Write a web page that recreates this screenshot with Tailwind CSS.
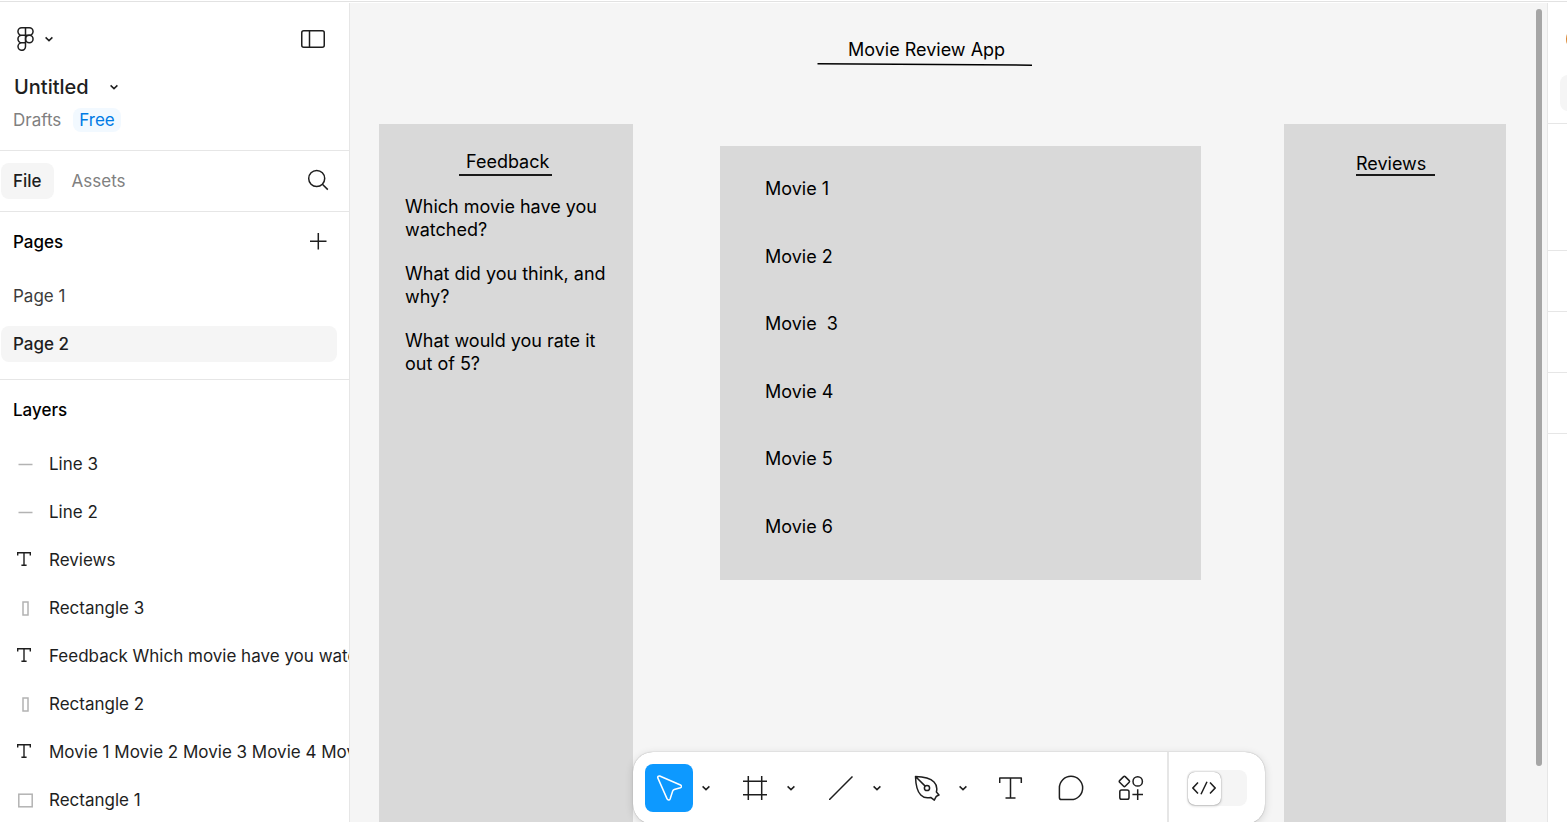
<!DOCTYPE html>
<html lang="en">
<head>
<meta charset="utf-8">
<meta name="viewport" content="width=device-width, initial-scale=1">
<title>Untitled</title>
<script src="https://cdn.jsdelivr.net/npm/@tailwindcss/browser@4"></script>
</head>
<body class="flex h-screen flex-col overflow-hidden bg-white font-[Inter,sans-serif] text-[17px] leading-6 text-[#1e1e1e]">
<svg class="hidden" aria-hidden="true">
  <symbol id="chevron" viewBox="0 0 10 6"><path d="M1.600 1.400 5 4.600 8.400 1.400" fill="none" stroke="currentColor" stroke-width="1.500"/></symbol>
  <symbol id="text" viewBox="0 0 14 16"><path d="M.7 3.600V.7h12.600v2.900M7 .7v12.600M4.400 13.300h5.200" fill="none" stroke="currentColor" stroke-width="1.400"/></symbol>
</svg>
<div class="mt-px h-0.5 shrink-0 border-t border-[#e2e2e2]"></div>
<div class="flex min-h-0 flex-1">

  <aside class="flex w-[350px] shrink-0 flex-col overflow-hidden border-r border-[#e6e6e6]">
    <header class="h-[148px] shrink-0 border-b border-[#e6e6e6] pl-[13px] pr-6 pt-6">
      <div class="flex h-6 items-center justify-between">
        <button class="flex items-center gap-2.5 pl-1" aria-label="Main menu">
          <svg class="h-6 w-[17px]" viewBox="0 0 17 24" fill="none" stroke="currentColor" stroke-width="1.5"><path d="M8.5.8H4.7a3.75 3.75 0 0 0 0 7.5h3.8zM8.5.8h3.8a3.75 3.75 0 0 1 0 7.5H8.5zM8.5 8.3H4.7a3.75 3.75 0 0 0 0 7.5h3.8zM4.7 15.8a3.75 3.75 0 1 0 3.8 3.7v-3.7z"/><circle cx="12.3" cy="12" r="3.75"/></svg>
          <svg class="h-1.5 w-2.5"><use href="#chevron"/></svg>
        </button>
        <button aria-label="Minimize UI"><svg class="h-[18px] w-6" viewBox="0 0 24 18" fill="none" stroke="currentColor" stroke-width="1.5"><rect x=".75" y=".75" width="22.500" height="16.500" rx="2"/><path d="M8.500.7v16.600"/></svg></button>
      </div>
      <button class="mt-6 flex h-6 items-center gap-5 pl-px text-[20px] font-medium">Untitled<svg class="h-1.5 w-2.5"><use href="#chevron"/></svg></button>
      <div class="mt-[9px] flex items-center gap-3 text-[#808080]">
        <a href="#">Drafts</a>
        <a href="#" class="rounded-lg bg-[#f2f9ff] px-1.5 text-[#007be5]">Free</a>
      </div>
    </header>

    <div class="flex h-[61px] shrink-0 items-center border-b border-[#e6e6e6] pl-px pr-5">
      <button class="h-9 rounded-lg bg-[#f5f5f5] px-3 font-medium">File</button>
      <button class="ml-1.5 h-9 px-3 text-[#808080]">Assets</button>
      <button class="ml-auto" aria-label="Find"><svg class="h-6 w-[22px]" viewBox="0 0 22 24" fill="none" stroke="currentColor" stroke-width="1.5"><circle cx="9.700" cy="9.500" r="8"/><path d="m15.400 15.200 5.400 5.400"/></svg></button>
    </div>

    <section class="h-[168px] shrink-0 border-b border-[#e6e6e6] pl-px pr-3 pt-3">
      <div class="flex h-9 items-center justify-between pl-3 pr-2.5">
        <h2 class="font-medium text-black">Pages</h2>
        <button aria-label="Add page"><svg class="h-5 w-[18px]" viewBox="0 0 18 20" fill="none" stroke="currentColor" stroke-width="1.5"><path d="M9.300 1v16.500M1 9.300h16.500"/></svg></button>
      </div>
      <button class="mt-[18px] block h-9 w-full rounded-lg px-3 text-left text-[#3c3c3c]">Page 1</button>
      <button class="mt-3 block h-9 w-full rounded-lg bg-[#f5f5f5] px-3 text-left font-medium">Page 2</button>
    </section>

    <section class="min-h-0 flex-1 overflow-hidden">
      <h2 class="mt-[18px] pl-[13px] font-medium text-black">Layers</h2>
      <ul class="mt-[18px] whitespace-nowrap">
        <li><button class="flex h-12 items-center gap-4 pl-[18px]"><svg class="h-4 w-[15px] shrink-0" viewBox="0 0 15 16"><path d="M.5 8.500h14" stroke="#b3b3b3" stroke-width="1.500"/></svg>Line 3</button></li>
        <li><button class="flex h-12 items-center gap-4 pl-[18px]"><svg class="h-4 w-[15px] shrink-0" viewBox="0 0 15 16"><path d="M.5 8.500h14" stroke="#b3b3b3" stroke-width="1.500"/></svg>Line 2</button></li>
        <li><button class="flex h-12 items-center gap-[18px] pl-[17px]"><svg class="h-4 w-3.5 shrink-0"><use href="#text"/></svg>Reviews</button></li>
        <li><button class="flex h-12 items-center gap-4 pl-[18px]"><svg class="h-4 w-[15px] shrink-0" viewBox="0 0 15 16"><rect x="5" y="2" width="5" height="13" fill="none" stroke="#b3b3b3" stroke-width="1.500"/></svg>Rectangle 3</button></li>
        <li><button class="flex h-12 items-center gap-[18px] pl-[17px]"><svg class="h-4 w-3.5 shrink-0"><use href="#text"/></svg>Feedback Which movie have you watched?</button></li>
        <li><button class="flex h-12 items-center gap-4 pl-[18px]"><svg class="h-4 w-[15px] shrink-0" viewBox="0 0 15 16"><rect x="5" y="2" width="5" height="13" fill="none" stroke="#b3b3b3" stroke-width="1.500"/></svg>Rectangle 2</button></li>
        <li><button class="flex h-12 items-center gap-[18px] pl-[17px]"><svg class="h-4 w-3.5 shrink-0"><use href="#text"/></svg>Movie 1 Movie 2 Movie 3 Movie 4 Movie 5 Movie 6</button></li>
        <li><button class="flex h-12 items-center gap-4 pl-[18px]"><svg class="h-4 w-[15px] shrink-0" viewBox="0 0 15 16"><rect x=".8" y="2.200" width="13.400" height="12.600" fill="none" stroke="#b3b3b3" stroke-width="1.500"/></svg>Rectangle 1</button></li>
      </ul>
    </section>
  </aside>

  <main class="relative min-w-0 flex-1 overflow-hidden bg-[#f5f5f5] text-[18px] leading-[23px] text-black">
    <!-- Free canvas objects -->
    <h1 class="absolute left-[498px] top-[35px] whitespace-nowrap">Movie Review App</h1>
    <svg class="absolute left-[467px] top-[59px] h-1 w-[215px]" viewBox="0 0 215 4"><path d="M.5 1.700 215 3.200" stroke="#000" stroke-width="1.500"/></svg>

    <div class="absolute bottom-0 left-[29px] top-[121px] w-[254px] bg-[#d9d9d9]"></div>
    <h2 class="absolute left-[116px] top-[147px]">Feedback</h2>
    <div class="absolute left-[109px] top-[171px] h-0.5 w-[93px] bg-[#1a1a1a]"></div>
    <div class="absolute left-[55px] top-[192px] whitespace-nowrap">
      <p>Which movie have you<br>watched?</p>
      <p class="mt-[21px]">What did you think, and<br>why?</p>
      <p class="mt-[21px]">What would you rate it<br>out of 5?</p>
    </div>

    <div class="absolute left-[370px] top-[143px] h-[434px] w-[481px] bg-[#d9d9d9]"></div>
    <ul class="absolute left-[415px] top-[174px] flex h-[361px] flex-col justify-between whitespace-pre">
      <li>Movie 1</li><li>Movie 2</li><li>Movie  3</li><li>Movie 4</li><li>Movie 5</li><li>Movie 6</li>
    </ul>

    <div class="absolute bottom-0 left-[934px] top-[121px] w-[222px] bg-[#d9d9d9]"></div>
    <h2 class="absolute left-[1006px] top-[149px]">Reviews</h2>
    <div class="absolute left-[1006px] top-[171px] h-0.5 w-[79px] bg-[#1a1a1a]"></div>

    <div class="absolute bottom-14 right-[5px] top-1.5 w-1.5 rounded-full bg-[#a6a6a6]"></div>

    <!-- Floating toolbar, running slightly past the lower edge -->
    <div class="absolute inset-x-0 -bottom-0.5 flex justify-center">
      <div role="toolbar" aria-label="Tools" class="flex h-[72px] items-center rounded-[20px] bg-white pl-3 text-[#1e1e1e] shadow-[0_0_1px_rgba(0,0,0,0.4),0_2px_8px_rgba(0,0,0,0.14)]">
        <div class="flex gap-3.5">
          <div class="flex">
            <button aria-label="Move" class="grid size-12 place-items-center rounded-lg bg-[#0d99ff] text-white"><svg class="size-[26px]" viewBox="-1 0 26 26" fill="none" stroke="currentColor" stroke-width="1.5" stroke-linejoin="round"><path d="M.8 2.900C.4 1.700 1.500.6 2.700 1L23.500 10c1.300.6 1.200 2.400-.1 2.800l-6.100 1.700a2.500 2.500 0 0 0-1.600 1.500l-2.600 8c-.5 1.400-2.400 1.400-2.900.1z"/></svg></button>
            <button aria-label="Move tools" class="grid w-6 place-items-center pl-0.5"><svg class="h-1.5 w-2.5"><use href="#chevron"/></svg></button>
          </div>
          <div class="flex">
            <button aria-label="Frame" class="grid size-12 place-items-center"><svg class="size-6" viewBox="0 0 24 24" fill="none" stroke="currentColor" stroke-width="1.5"><path d="M5.300 0v24M18.700 0v24M0 5.300h24M0 18.700h24"/></svg></button>
            <button aria-label="Region tools" class="grid w-6 place-items-center"><svg class="h-1.5 w-2.5"><use href="#chevron"/></svg></button>
          </div>
          <div class="flex">
            <button aria-label="Line" class="grid size-12 place-items-center"><svg class="size-6" viewBox="0 0 24 24" fill="none" stroke="currentColor" stroke-width="1.5"><path d="M0 24 23.500.5"/></svg></button>
            <button aria-label="Shape tools" class="grid w-6 place-items-center"><svg class="h-1.5 w-2.5"><use href="#chevron"/></svg></button>
          </div>
          <div class="flex">
            <button aria-label="Pen" class="grid size-12 place-items-center"><svg class="size-[26px]" viewBox="0 0 26 26" fill="none" stroke="currentColor" stroke-width="1.5" stroke-linejoin="round"><path d="M1.500 1.500c7.500.2 15 2 18.500 5.500 2.800 2.800 3.300 6.300 2.400 10l2.600 3-1.600.7c-.9.400-1.300.8-1.700 1.700l-1.400 2.700-3.600-2.700c-4 1-7.500.1-9.900-2.400C3.400 16.700 1.700 9 1.500 1.500zM1.500 1.500l9.700 9.600"/><circle cx="13" cy="13" r="2.600"/></svg></button>
            <button aria-label="Drawing tools" class="grid w-6 place-items-center"><svg class="h-1.5 w-2.5"><use href="#chevron"/></svg></button>
          </div>
        </div>
        <div class="ml-3 flex gap-3">
          <button aria-label="Text" class="grid size-12 place-items-center"><svg class="h-[22px] w-6" viewBox="0 0 24 22" fill="none" stroke="currentColor" stroke-width="1.5" stroke-linejoin="round"><path d="M.7 6V1h21.600v5M11.500 1v20M6.500 21h10"/></svg></button>
          <button aria-label="Comment" class="grid size-12 place-items-center"><svg class="size-[26px]" viewBox="0 0 26 26" fill="none" stroke="currentColor" stroke-width="1.500"><path d="M13 1.300a11.600 11.600 0 1 1 0 23.300H3.500a2.100 2.100 0 0 1-2.100-2.100V13A11.600 11.600 0 0 1 13 1.300z"/></svg></button>
          <button aria-label="Actions" class="grid size-12 place-items-center"><svg class="size-[26px]" viewBox="0 0 26 26" fill="none" stroke="currentColor" stroke-width="1.500" stroke-linejoin="round"><path d="M5.600 1.600c.5-.5 1.100-.5 1.600 0l4 4c.5.5.5 1.100 0 1.600l-4 4c-.5.5-1.100.5-1.600 0l-4-4c-.5-.5-.5-1.100 0-1.600z"/><circle cx="19.700" cy="6.400" r="4.700"/><rect x="1.800" y="15" width="9.200" height="9.200" rx="1.800"/><path d="M19.700 14.300v10.600M14.400 19.600H25"/></svg></button>
        </div>
        <div class="ml-3 flex h-full items-center border-l-2 border-[#e6e6e6] px-[18px]">
          <button role="switch" aria-checked="false" aria-label="Dev Mode" class="flex h-9 w-[60px] items-center rounded-lg bg-[#f5f5f5] p-px">
            <span class="grid size-[33px] place-items-center rounded-[7px] bg-white shadow-[0_0_1px_rgba(0,0,0,0.5),0_1px_3px_rgba(0,0,0,0.2)]"><svg class="h-3.5 w-6" viewBox="0 0 24 14" fill="none" stroke="currentColor" stroke-width="1.500"><path d="M6 1.500.9 7 6 12.500M18 1.500 23.100 7 18 12.500M15 .7 9 13.300"/></svg></span>
          </button>
        </div>
      </div>
    </div>
  </main>

  <!-- Properties panel, mostly outside the window -->
  <aside class="flex w-5 shrink-0 flex-col overflow-hidden border-l border-[#e6e6e6]">
    <div class="h-[121px] shrink-0 border-b border-[#e6e6e6] pl-3 pt-6">
      <div class="ml-1.5 size-6 rounded-full bg-[#d9822b]"></div>
      <div class="mt-6 h-9 w-24 rounded-lg bg-[#f5f5f5]"></div>
    </div>
    <div class="h-[127px] shrink-0 border-b border-[#e6e6e6]"></div>
    <div class="h-[61px] shrink-0 border-b border-[#e6e6e6]"></div>
    <div class="h-[61px] shrink-0 border-b border-[#e6e6e6]"></div>
    <div class="h-[61px] shrink-0 border-b border-[#e6e6e6]"></div>
  </aside>
</div>
</body>
</html>
